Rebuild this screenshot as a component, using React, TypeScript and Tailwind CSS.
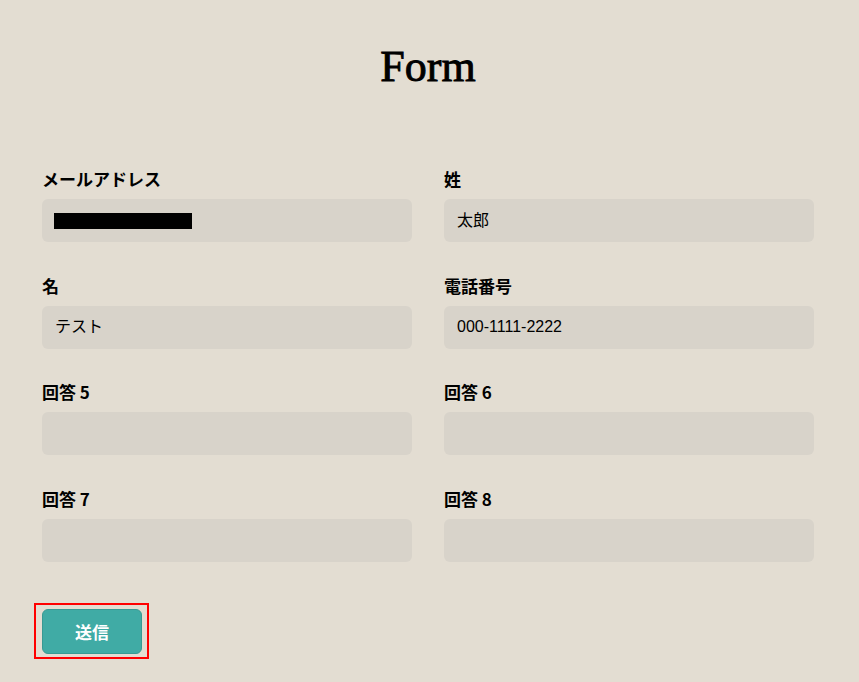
import React from "react";

const labelCls =
  "block mb-2 text-[17px] leading-6 font-bold text-black [font-family:'Noto_Sans_CJK_JP','Noto_Sans',sans-serif]";
const inputCls =
  "w-full h-[43px] rounded-md bg-[#d8d3ca] pl-[13px] pr-3 flex items-center text-[16px] text-black [font-family:'Liberation_Sans','Noto_Sans_CJK_JP',sans-serif]";

function Field({ label, value, redacted }: { label: string; value?: string; redacted?: boolean }) {
  return (
    <div>
      <label className={labelCls}>{label}</label>
      <div className={inputCls}>
        {redacted ? <span className="block -ml-px w-[138px] h-[16px] bg-black" /> : <span>{value}</span>}
      </div>
    </div>
  );
}

export default function App() {
  return (
    <div className="min-h-[682px] w-full bg-[#e3ddd2] pl-[42px] pr-[45px]">
      <h1 className="pt-[45px] text-center text-[44px] leading-[44px] font-normal text-black [font-family:'Liberation_Serif',serif] [-webkit-text-stroke:0.9px_black]">
        Form
      </h1>
      <div className="mt-[78px] grid grid-cols-2 gap-x-8 gap-y-[31.67px]">
        <Field label="メールアドレス" redacted />
        <Field label="姓" value="太郎" />
        <Field label="名" value="テスト" />
        <Field label="電話番号" value="000-1111-2222" />
        <Field label="回答 5" />
        <Field label="回答 6" />
        <Field label="回答 7" />
        <Field label="回答 8" />
      </div>
      <div className="mt-[41px] -ml-[8px] inline-block border-2 border-[#ff0000] pl-[6px] pr-[5px] pt-[4px] pb-[3px]">
        <button className="w-[100px] h-[45px] rounded-md bg-[#40aba5] border border-[#379a93] text-white text-[17px] font-bold [font-family:'Noto_Sans_CJK_JP',sans-serif]">
          送信
        </button>
      </div>
    </div>
  );
}
